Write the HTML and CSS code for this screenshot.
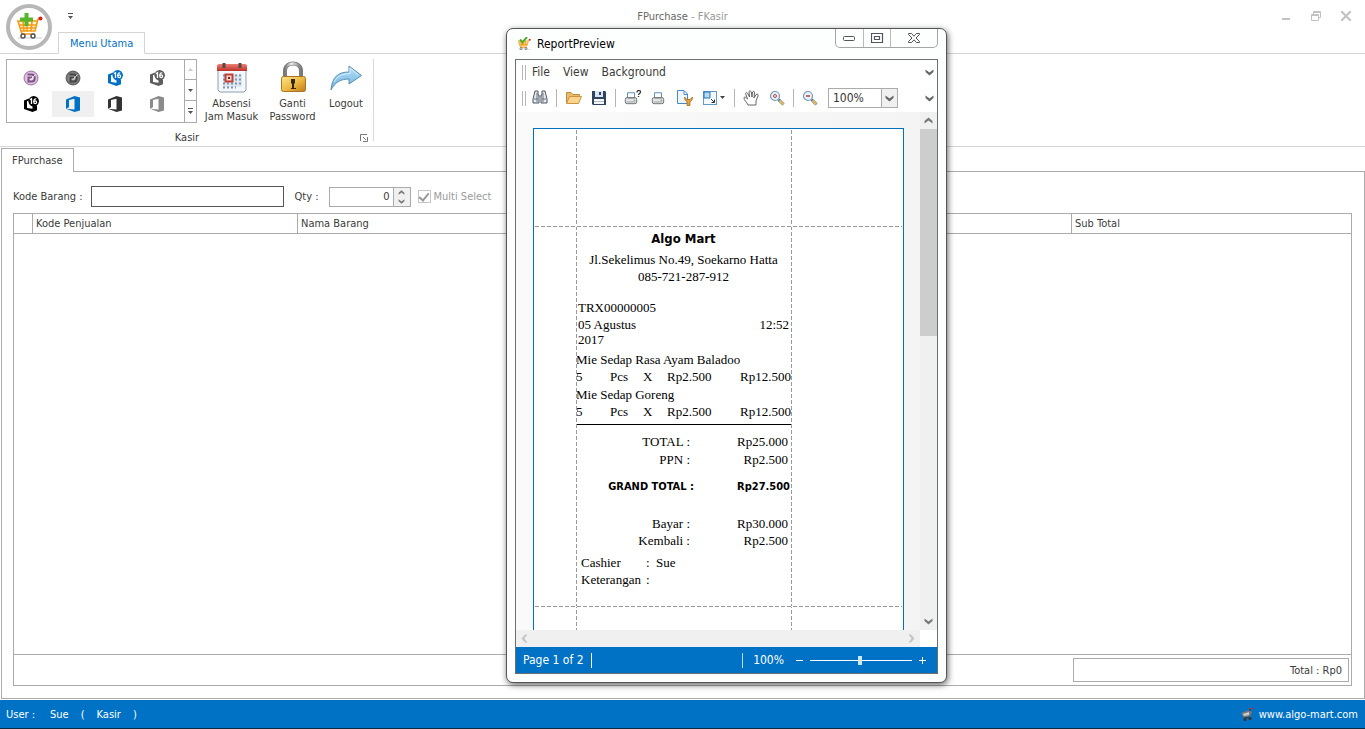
FILE: index.html
```html
<!DOCTYPE html>
<html lang="id">
<head>
<meta charset="utf-8">
<title>FPurchase - FKasir</title>
<link rel="stylesheet" href="styles.css">
</head>
<body>
<svg class="defs" aria-hidden="true">
  <defs>
    <linearGradient id="gold" x1="0" y1="0" x2="1" y2="1"><stop offset="0" stop-color="#ffe58a"/><stop offset=".5" stop-color="#eebb45"/><stop offset="1" stop-color="#c07b17"/></linearGradient>
    <linearGradient id="steel"><stop offset="0" stop-color="#777"/><stop offset=".4" stop-color="#eee"/><stop offset="1" stop-color="#777"/></linearGradient>
    <linearGradient id="sky" x1="0" y1="0" x2="0" y2="1"><stop offset="0" stop-color="#b4e0f8"/><stop offset="1" stop-color="#6fb0de"/></linearGradient>
    <linearGradient id="red" x1="0" y1="0" x2="0" y2="1"><stop offset="0" stop-color="#ee8074"/><stop offset="1" stop-color="#bd3028"/></linearGradient>
    <radialGradient id="purple"><stop offset="0" stop-color="#f8e8f9"/><stop offset="1" stop-color="#dcabe2"/></radialGradient>
    <radialGradient id="iron"><stop offset="0" stop-color="#c4c4c4"/><stop offset="1" stop-color="#666"/></radialGradient>
    <symbol id="office" viewBox="0 0 16 16"><path d="M1 3.500 9.500 0 15 1.500V14.500L9.500 16 1 12.800 9.500 13.500V2.700L4 4V11.300L1 12.800Z" fill="currentColor"/></symbol>
    <symbol id="office16" viewBox="0 0 16 16"><path d="M1 4.500 6 2.500V4.500L4 5.200V12L9.500 12.700V10L14 9.500V14.300L9.500 16 1 13Z" fill="currentColor"/><circle cx="10.700" cy="5.200" r="5.200" fill="currentColor"/><path d="M7 3.800 8.500 2.700V8" fill="none" stroke="#fff" stroke-width="1.300"/><path d="M13.300 3C11.300 2.600 10.700 4 10.800 6" fill="none" stroke="#fff" stroke-width="1.200"/><circle cx="12.200" cy="6.300" r="1.400" fill="none" stroke="#fff" stroke-width="1.200"/></symbol>
    <symbol id="dx" viewBox="0 0 16 16"><circle cx="8" cy="8" r="7" stroke="currentColor" stroke-opacity=".7"/><path d="M4.500 4.500H8.500C12.800 4.500 12.800 11.500 8.500 11.500H5.500V7.500H9" fill="none" stroke="currentColor" stroke-width="2"/><path d="M8 9.500 12.500 4.500" stroke="#fff" stroke-opacity=".8"/></symbol>
    <symbol id="cart" viewBox="0 0 28 28"><path d="M3 25H27" stroke="#ccc"/><path d="M2 8H22L20 18H6Z" fill="#fff4d6"/><path d="M2 8H22.500L20 18H6L3 8M4 12H21M5 15H20M8 8 9 18M12 8V18M17 8 16 18M22 8 24 5H26M6 18 7 21H20" fill="none" stroke="#f59a13" stroke-width="1.600"/><circle cx="8" cy="23" r="2" fill="#fff" stroke="#555" stroke-width="1.500"/><circle cx="18" cy="23" r="2" fill="#fff" stroke="#555" stroke-width="1.500"/><circle cx="25.500" cy="5.500" r="2" fill="#d8231d"/></symbol>
    <symbol id="printer" viewBox="0 0 16 16"><path d="M4 8V2H12V8" fill="#fff" stroke="#4a7fb0"/><rect x="1.500" y="7.500" width="13" height="7" rx="2" fill="#e3e5e8" stroke="#666"/><path d="M4 8.500H12M3 12.500H13" stroke="#999"/><path d="M11 10.500H13" stroke="#2da84a"/></symbol>
    <symbol id="lens" viewBox="0 0 16 16"><path d="M9.500 9.500 14.500 14.500" stroke="#55779a" stroke-width="3"/><path d="M10.500 10.500 14.500 14.500" stroke="#edbc55" stroke-width="2"/><circle cx="6" cy="6" r="4.500" fill="#e3f2fc" stroke="#7899b5" stroke-width="1.200"/></symbol>
    <symbol id="down" viewBox="0 0 9 7"><path d="M.5.500 4.500 3.500 8.500.500V3L4.500 6.500.500 3Z" fill="currentColor"/></symbol>
    <symbol id="tri" viewBox="0 0 7 7"><path d="M1 2H6L3.500 5Z" fill="currentColor"/></symbol>
    <symbol id="tribar" viewBox="0 0 7 7"><path d="M1 0H6V1H1ZM1 3H6L3.500 6Z" fill="currentColor"/></symbol>
  </defs>
</svg>

<header class="titlebar">
  <button class="orb" aria-label="Aplikasi"><svg width="28" height="28"><use href="#cart"/><path d="M9.500 0H13.500V4.500H18V8.500H13.500V13H9.500V8.500H5V4.500H9.500Z" fill="#58b52b"/></svg></button>
  <button class="quick" aria-label="Kustomisasi"><svg width="7" height="7"><use href="#tribar"/></svg></button>
  <h1 class="caption">FPurchase <span>- FKasir</span></h1>
  <div class="window-buttons">
    <button aria-label="Minimize"><svg width="10" height="10"><path d="M1 7H9V9H1Z" fill="#c3c3c3"/></svg></button>
    <button aria-label="Restore"><svg width="10" height="10"><path d="M2.500 3V.500H9.500V6.500H8M2 1.500H10M.500 3.500H7.500V9.500H.500ZM0 4.500H8" fill="none" stroke="#c3c3c3"/></svg></button>
    <button aria-label="Close"><svg width="10" height="10"><path d="M0 0 10 10M10 0 0 10" stroke="#c3c3c3" stroke-width="2.200"/></svg></button>
  </div>
</header>
<nav class="ribbon-tabs"><button class="ribbon-tab">Menu Utama</button></nav>

<section class="ribbon">
  <div class="group">
    <div class="group-items">
      <div class="gallery">
        <div class="skins">
          <button class="skin purple" aria-label="Skin 1"><svg width="16" height="16" fill="url(#purple)"><use href="#dx"/></svg></button>
          <button class="skin iron" aria-label="Skin 2"><svg width="16" height="16" fill="url(#iron)"><use href="#dx"/></svg></button>
          <button class="skin blue" aria-label="Skin 3"><svg width="16" height="16"><use href="#office16"/></svg></button>
          <button class="skin gray" aria-label="Skin 4"><svg width="16" height="16"><use href="#office16"/></svg></button>
          <button class="skin black" aria-label="Skin 5"><svg width="16" height="16"><use href="#office16"/></svg></button>
          <button class="skin blue selected" aria-label="Skin 6"><svg width="16" height="16"><use href="#office"/></svg></button>
          <button class="skin dark" aria-label="Skin 7"><svg width="16" height="16"><use href="#office"/></svg></button>
          <button class="skin silver" aria-label="Skin 8"><svg width="16" height="16"><use href="#office"/></svg></button>
        </div>
        <div class="gallery-scroll">
          <button aria-label="Naik" disabled><svg width="7" height="7"><path d="M1 5H6L3.500 2Z" fill="#ccc"/></svg></button>
          <button aria-label="Turun"><svg width="7" height="7"><use href="#tri"/></svg></button>
          <button aria-label="Semua"><svg width="7" height="7"><use href="#tribar"/></svg></button>
        </div>
      </div>
      <button class="big"><svg width="32" height="32" viewBox="0 0 32 32"><path d="M2 5H30V29L28 31H4L2 29Z" fill="#f5f8fb" stroke="#8da0b4"/><path d="M1 10V4.500Q1 3 3 3H29Q31 3 31 4.500V10Z" fill="url(#red)"/><path d="M8 2V7M24 2V7" stroke="#57484c" stroke-width="3"/><path d="M7 13H26V26H7Z" fill="#dfe7ef"/><path d="M7 14.500H26M7 18.500H26M7 22.500H26M7 26.500H20" stroke="#7e95b5" stroke-width="2" stroke-dasharray="2 2"/><rect x="9.500" y="13.500" width="7" height="7" fill="#f9d6cf" stroke="#bf4034" stroke-width="2"/><path d="M12 16H14V18H12Z" fill="#7d2420"/></svg><span>Absensi<br>Jam Masuk</span></button>
      <button class="big"><svg width="32" height="32" viewBox="0 0 32 32"><path d="M8 17V10C8 0 24 0 24 10V17" fill="none" stroke="#777" stroke-width="4"/><path d="M8 17V10C8 0 24 0 24 10V17" fill="none" stroke="url(#steel)" stroke-width="2.500"/><rect x="4.500" y="15.500" width="24" height="15" rx="2" fill="url(#gold)" stroke="#a77422"/><path d="M14 18H18V22L17 23V27H19V28H14V27H15V23L14 22Z" fill="#33291a"/></svg><span>Ganti<br>Password</span></button>
      <button class="big"><svg width="32" height="32" viewBox="0 0 32 32"><path d="M1 29C2 16 8 11 19 11V5L31.500 14.500 19 23V18C11 18 5 21 1 29Z" fill="url(#sky)" stroke="#5b8fb8"/><path d="M4 21C8 14 13 13 20 12.500V7L28 14" fill="none" stroke="#d6f1ff"/></svg><span>Logout</span></button>
    </div>
    <div class="group-foot"><span>Kasir</span><button class="launcher" aria-label="Opsi Kasir"><svg width="8" height="8"><path d="M.500 7V.500H7M3 3 6 6M7.500 3V7.500H3" fill="none" stroke="#777"/></svg></button></div>
  </div>
</section>

<main class="workspace">
  <div class="doc-tabs"><button class="doc-tab">FPurchase</button></div>
  <div class="doc">
    <form class="entry">
      <label for="kode">Kode Barang :</label>
      <input class="code" id="kode" type="text">
      <label for="qty">Qty :</label>
      <div class="spin">
        <input id="qty" type="text" value="0">
        <div class="spin-buttons"><button type="button" aria-label="Tambah"><svg class="flip" width="7" height="5"><use href="#down"/></svg></button><button type="button" aria-label="Kurang"><svg width="7" height="5"><use href="#down"/></svg></button></div>
      </div>
      <label class="multi"><input type="checkbox" checked disabled>Multi Select</label>
    </form>
    <div class="grid">
      <table>
        <colgroup><col class="c-mark"><col class="c-code"><col><col class="c-sub"></colgroup>
        <thead><tr><th></th><th>Kode Penjualan</th><th>Nama Barang</th><th>Sub Total</th></tr></thead>
      </table>
      <div class="grid-body"></div>
      <div class="grid-foot"><output>Total : Rp0</output></div>
    </div>
  </div>
</main>

<footer class="status">
  <div class="user"><span>User :</span><span>Sue</span><span>(</span><span>Kasir</span><span>)</span></div>
  <div class="site"><svg width="12" height="13"><path d="M0 5 8 2 11 4 9 9 3 10Z" fill="#777"/><path d="M2 6 8 4V7L3 8Z" fill="#ccc"/><path d="M3 10 9 9M8 3 10 1" stroke="#333"/><path d="M8 .500H12V2" fill="none" stroke="#c22b2b"/><circle cx="4" cy="11.500" r="1.500" fill="#333"/><circle cx="9" cy="10.500" r="1.500" fill="#333"/></svg><span>www.algo-mart.com</span></div>
</footer>

<div class="preview" role="dialog" aria-labelledby="preview-title">
  <div class="preview-title">
    <svg width="14" height="14" viewBox="0 0 28 28"><use href="#cart"/><path d="M6 5 11 11 20 0" fill="none" stroke="#4fae2a" stroke-width="4"/></svg>
    <h2 id="preview-title">ReportPreview</h2>
    <div class="aero">
      <button aria-label="Minimize"><svg width="13" height="5"><rect x=".5" y=".5" width="11" height="4" rx="1" fill="#fff" stroke="#50545f"/></svg></button>
      <button aria-label="Maximize"><svg width="13" height="10"><path d="M.500.500H11.500V9.500H.500ZM3.500 3.500H8.500V6.500H3.500Z" fill="#fff" stroke="#50545f" stroke-width="1.200"/></svg></button>
      <button aria-label="Close"><svg width="12" height="10"><path d="M.500.500H3.500L6 3.200 8.500.500H11.500V1.500L8 5 11.500 8.500V9.500H8.500L6 6.800 3.500 9.500H.500V8.500L4 5 .500 1.500Z" fill="#fff" stroke="#50545f"/></svg></button>
    </div>
  </div>
  <div class="preview-body">
    <div class="menubar"><i class="grip"></i><button>File</button><button>View</button><button>Background</button><svg class="more" width="9" height="7"><use href="#down"/></svg></div>
    <div class="toolbar">
      <i class="grip"></i>
      <button aria-label="Cari"><svg width="16" height="16"><path d="M3 1H6V4L7 6V13H1V9ZM10 1H13L15 9V13H9V6L10 4Z" fill="#e6e9ee" stroke="#4c5560"/><path d="M2 9H6M10 9H14M5 3V12M11 3V12M7 6H9" stroke="#68717d"/></svg></button>
      <i class="sep"></i>
      <button class="t-open" aria-label="Buka"><svg width="17" height="16"><path d="M1.500 13V2.500H6L8 4.500H14.500V7" fill="#e9bc6b" stroke="#c08b38"/><path d="M1.500 13.500 4.500 6.500H16.500L13.500 13.500Z" fill="#fbd48d" stroke="#cc9442"/></svg></button>
      <button class="t-save" aria-label="Simpan"><svg width="16" height="16"><path d="M1 1H14L15 2V15H2L1 14Z" fill="#31445f"/><path d="M4 1H12V7H4Z" fill="#d8e5f2"/><path d="M8 2H10V5H8Z" fill="#31445f"/><path d="M3 9H13V14H3Z" fill="#f5f7f9"/><path d="M3 11.500H13" stroke="#b3bdc8"/></svg></button>
      <i class="sep"></i>
      <button class="t-print" aria-label="Cetak"><svg width="18" height="16"><use href="#printer" width="14" height="16"/><path d="M13 2.500C13-.200 16.500-.200 16.500 2 16.500 3.500 14.500 3.500 14.500 5M14.500 6V7" fill="none" stroke="#333" stroke-width="1.300"/></svg></button>
      <button class="t-quick" aria-label="Cetak langsung"><svg width="16" height="16"><use href="#printer" width="14" height="16"/></svg></button>
      <button class="t-page" aria-label="Pengaturan halaman"><svg width="17" height="16"><path d="M1.500.500H8L11.500 4V13.500H1.500ZM8 1V4.500H11" fill="#eef7ff" stroke="#4a8ac4"/><path d="M8.500 7 9 10 11 11.500V15.500H14V11.500L16 10 16.500 7 14 9.500H11Z" fill="#e5a33c" stroke="#a86a17" stroke-width=".8"/></svg></button>
      <button class="t-scale" aria-label="Skala"><svg width="24" height="16"><rect x="1.500" y="1.500" width="13" height="13" fill="#f5faff" stroke="#5e9ccc"/><path d="M2 2H8V8H2Z" fill="#b5daf6" stroke="#2575b5"/><path d="M9 9 12 12M9.500 12.500H12.500V9.500" fill="none" stroke="#333"/><path d="M18 6H23L20.500 9Z" fill="#444"/></svg></button>
      <i class="sep"></i>
      <button class="t-hand" aria-label="Geser"><svg width="17" height="16"><path d="M5 15C4 12 .500 10 1 7.500 2 6.500 3 7.500 4.500 9L2.500 3.500C3 2 4.500 2.500 5 4L6.500 7 6 1.500C7 .300 8 1 8.300 2L9 7 9.500 2C10.500 .500 11.700 1.500 11.500 3L11 8 13 4.500C14.500 3.500 15.500 4.500 15 6L13 11V15Z" fill="#fff" stroke="#666"/></svg></button>
      <button class="t-zoom" aria-label="Kaca pembesar"><svg width="16" height="16"><use href="#lens"/><circle cx="6" cy="6" r="1.500" fill="none" stroke="#cc3b34"/></svg></button>
      <i class="sep"></i>
      <button class="t-out" aria-label="Perkecil"><svg width="16" height="16"><use href="#lens"/><path d="M4 6H8" stroke="#c53b34" stroke-width="1.500"/></svg></button>
      <div class="zoom"><select aria-label="Zoom"><option>100%</option></select><svg width="9" height="7"><use href="#down"/></svg></div>
      <svg class="more" width="9" height="7"><use href="#down"/></svg>
    </div>
    <div class="viewer">
      <div class="canvas">
        <div class="paper">
          <i class="guide v left"></i><i class="guide v right"></i><i class="guide h top"></i><i class="guide h bottom"></i>
          <article class="receipt">
            <h3>Algo Mart</h3>
            <p class="address">Jl.Sekelimus No.49, Soekarno Hatta<br>085-721-287-912</p>
            <p class="trx">TRX00000005</p>
            <div class="when"><span class="date">05 Agustus 2017</span><span>12:52</span></div>
            <table class="items">
              <colgroup><col class="i-qty"><col class="i-unit"><col class="i-x"><col class="i-price"><col></colgroup>
              <tr class="name"><td colspan="5">Mie Sedap Rasa Ayam Baladoo</td></tr>
              <tr><td>5</td><td>Pcs</td><td>X</td><td>Rp2.500</td><td>Rp12.500</td></tr>
              <tr class="name"><td colspan="5">Mie Sedap Goreng</td></tr>
              <tr><td>5</td><td>Pcs</td><td>X</td><td>Rp2.500</td><td>Rp12.500</td></tr>
            </table>
            <dl class="sums"><dt>TOTAL :</dt><dd>Rp25.000</dd><dt>PPN :</dt><dd>Rp2.500</dd></dl>
            <dl class="sums grand"><dt>GRAND TOTAL :</dt><dd>Rp27.500</dd></dl>
            <dl class="sums paid"><dt>Bayar :</dt><dd>Rp30.000</dd><dt>Kembali :</dt><dd>Rp2.500</dd></dl>
            <dl class="notes"><dt>Cashier</dt><dd>:&nbsp; Sue</dd><dt>Keterangan</dt><dd>:</dd></dl>
          </article>
        </div>
      </div>
      <div class="vscroll"><svg class="flip" width="9" height="7"><use href="#down"/></svg><div class="thumb"></div><svg class="end" width="9" height="7"><use href="#down"/></svg></div>
      <div class="hscroll"><svg width="7" height="9"><path d="M6.500.500 3.500 4.500 6.500 8.500H4L.500 4.500 4 .500Z" fill="#c6c6c6"/></svg><svg width="7" height="9"><path d="M.500.500 3.500 4.500.500 8.500H3L6.500 4.500 3 .500Z" fill="#c6c6c6"/></svg></div>
      <div class="corner"></div>
    </div>
    <div class="preview-status">
      <span class="page-no">Page 1 of 2</span>
      <span class="percent">100%</span>
      <button aria-label="Perkecil"><svg width="9" height="9"><path d="M1 4.500H8" stroke="#fff"/></svg></button>
      <input type="range" min="0" max="200" value="98" aria-label="Zoom">
      <button aria-label="Perbesar"><svg width="9" height="9"><path d="M1 4.500H8M4.500 1V8" stroke="#fff"/></svg></button>
    </div>
  </div>
</div>
</body>
</html>
```
FILE: styles.css
```css
* { box-sizing: border-box; }

body {
  margin: 0;
  min-height: 100vh;
  display: flex;
  flex-direction: column;
  position: relative;
  background: #fff;
  color: #3b3b3b;
  font: 11px/13px "DejaVu Sans Condensed", "Noto Sans", sans-serif;
}

button, input, select { font: inherit; color: inherit; }
button { margin: 0; padding: 0; border: 0; background: none; }
h1, h2, h3, p, dl, dd { margin: 0; font-size: inherit; }
h1, h2 { font-weight: normal; }
svg { display: block; flex: none; }
i { display: block; flex: none; }
.defs { position: absolute; width: 0; height: 0; }
.flip { transform: rotate(180deg); }

/* Title bar */
.titlebar {
  height: 32px;
  display: grid;
  grid-template-columns: 1fr auto 1fr;
  align-items: center;
}
.orb {
  position: absolute;
  left: 6px;
  top: 4px;
  width: 46px;
  height: 46px;
  display: grid;
  place-items: center;
  border: 4px solid #b7b7b7;
  border-radius: 50%;
  background: #fff;
}
.quick { justify-self: start; margin-left: 67px; color: #555; }
.caption { color: #666; }
.caption span { color: #999; }
.window-buttons { justify-self: end; display: flex; gap: 20px; padding-right: 14px; }

/* Ribbon */
.ribbon-tabs { height: 22px; padding-left: 58px; border-bottom: 1px solid #d4d4d4; }
.ribbon-tab {
  height: 22px;
  padding: 0 11px;
  border: 1px solid #d4d4d4;
  border-bottom-color: #fff;
  background: #fff;
  color: #0072c6;
}
.ribbon { display: flex; height: 93px; padding: 5px 6px; border-bottom: 1px solid #d4d4d4; }
.group { display: flex; flex-direction: column; border-right: 1px solid #d9d9d9; }
.group-items { display: flex; padding-right: 4px; }
.gallery { display: flex; width: 191px; height: 64px; margin-right: 4px; border: 1px solid #ababab; }
.skins { flex: 1; display: grid; grid-template-columns: repeat(4, 42px); grid-auto-rows: 26px; padding: 5px 3px; }
.skin { display: grid; place-items: center; }
.selected { background: #f0f0f0; }
.purple { color: #79577d; }
.iron { color: #444; }
.blue { color: #0072c6; }
.gray { color: #5e5e5e; }
.black { color: #000; }
.dark { color: #333; }
.silver { color: #8b8b8b; }
.gallery-scroll { width: 12px; display: grid; grid-template-rows: 19px 21px 1fr; border-left: 1px solid #ababab; }
.gallery-scroll button { display: grid; place-items: center; color: #555; }
.gallery-scroll button + button { border-top: 1px solid #ababab; }
.big { display: flex; flex-direction: column; align-items: center; gap: 4px; width: 61px; padding-top: 2px; }
.big:last-child { width: 46px; }
.group-foot { display: grid; grid-template-columns: 1fr auto 1fr; align-items: center; padding: 8px 5px 0 0; }
.group-foot span { grid-column: 2; }
.launcher { justify-self: end; }

/* Document */
.workspace { flex: 1; display: flex; flex-direction: column; padding: 1px 0 1px 1px; }
.doc-tabs { display: flex; height: 24px; }
.doc-tab { height: 24px; padding: 0 10px; border: 1px solid #ababab; border-bottom: 0; background: #fff; position: relative; z-index: 1; }
.doc { flex: 1; display: flex; flex-direction: column; padding: 14px 12px 12px 11px; border: 1px solid #ababab; margin-top: -1px; }
.entry { display: flex; align-items: center; height: 21px; margin-bottom: 6px; }
.code { width: 193px; height: 21px; margin: 0 11px 0 8px; border: 1px solid #555; padding: 0 4px; }
.spin { display: flex; width: 82px; height: 20px; margin: 0 7px 0 10px; border: 1px solid #ababab; }
.spin input { flex: 1; min-width: 0; border: 0; padding: 0 3px; text-align: right; }
.spin-buttons { display: grid; width: 17px; border-left: 1px solid #ababab; background: #f0f0f0; color: #777; }
.spin-buttons button { display: grid; place-items: center; }
.multi { display: flex; align-items: center; gap: 3px; color: #9b9b9b; }
.multi input { appearance: none; width: 13px; height: 13px; margin: 0; border: 1px solid #c6c6c6; display: grid; place-items: center; }
.multi input::before { content: ""; width: 8px; height: 4px; border: solid #999; border-width: 0 0 2px 2px; transform: translateY(-1px) rotate(-50deg); }
.grid { flex: 1; display: flex; flex-direction: column; border: 1px solid #ababab; }
.grid table { width: 100%; border-spacing: 0; table-layout: fixed; }
.grid th { height: 20px; padding: 0 3px; font-weight: normal; text-align: left; border: solid #ababab; border-width: 0 1px 1px 0; }
.grid th:last-child { border-right: 0; }
.c-mark { width: 19px; }
.c-code { width: 265px; }
.c-sub { width: 279px; }
.grid-body { flex: 1; }
.grid-foot { display: flex; justify-content: flex-end; padding: 3px 2px; border-top: 1px solid #ababab; }
.grid-foot output { width: 276px; height: 24px; padding: 5px 6px; border: 1px solid #ababab; text-align: right; }

/* Main status bar */
.status {
  display: flex;
  justify-content: space-between;
  align-items: center;
  height: 29px;
  padding: 0 7px 0 6px;
  background: #0072c6;
  border-bottom: 1px solid #0b2a42;
  color: #fff;
}
.user { display: flex; gap: 12px; }
.user span:first-child { margin-right: 3px; }
.site { display: flex; align-items: center; gap: 6px; }

/* Report preview window */
.preview {
  position: absolute;
  left: 506px;
  top: 28px;
  width: 441px;
  padding: 0 8px 8px;
  border: 1px solid #555;
  border-radius: 7px;
  background: #fdfefe;
  box-shadow: 1px 2px 6px rgba(0, 0, 0, .6);
  font-size: 12px;
  line-height: 15px;
}
.preview-title { display: flex; align-items: center; height: 30px; padding-left: 2px; gap: 6px; color: #000; }
.aero { display: flex; align-self: flex-start; margin-left: auto; height: 19px; border: 1px solid #a5a5a5; border-top: 0; border-radius: 0 0 5px 5px; }
.aero button { display: grid; place-items: center; width: 27px; }
.aero button + button { border-left: 1px solid #b9b9b9; }
.aero button:last-child { width: 47px; }
.preview-body { border: 1px solid #6e6e6e; background: #fff; }
.menubar, .toolbar { display: flex; align-items: center; height: 26px; padding: 0 3px 0 6px; }
.menubar { height: 25px; }
.menubar button { margin-right: 13px; }
.grip { width: 4px; height: 15px; margin-right: 6px; border: solid #b5b5b5; border-width: 0 1px; }
.more { margin-left: auto; color: #666; }
.sep { width: 1px; height: 18px; margin: 0 8px; background: #b5b5b5; }
.t-save, .t-quick, .t-page { margin-left: 9px; }
.t-scale, .t-zoom { margin-left: 9px; }
.zoom { display: flex; align-items: center; position: relative; width: 70px; height: 20px; margin-left: 10px; color: #333; }
.zoom select { appearance: none; width: 100%; height: 20px; padding: 0 4px; border: 1px solid #ababab; border-radius: 0; background: linear-gradient(90deg, #fff 52px, #ababab 52px, #ababab 53px, #f0f0f0 53px); }
.zoom svg { position: absolute; right: 4px; top: 7px; color: #666; pointer-events: none; }
.viewer { display: grid; grid-template-columns: 1fr 17px; margin-top: 1px; }
.canvas { padding: 16px 16px 0 17px; background: linear-gradient(90deg, #fafafa, #f4f4f4); }
.paper { position: relative; padding: 98px 112px 42px 42px; border: 1px solid #0072c6; border-bottom: 0; background: #fff; }
.guide { position: absolute; }
.v { top: 1px; bottom: 0; width: 1px; background: repeating-linear-gradient(#999 0 4px, #fff 4px 6px); }
.h { left: 1px; right: 1px; height: 1px; background: repeating-linear-gradient(90deg, #999 0 4px, #fff 4px 6px); }
.left { left: 42px; }
.right { right: 111px; }
.top { top: 97px; }
.bottom { bottom: 23px; }

.receipt { color: #000; font: 13px/17px "Liberation Serif", serif; }
.receipt h3 { font: bold 13px/24px "DejaVu Sans Condensed", "Noto Sans", sans-serif; text-align: center; }
.address { text-align: center; }
.trx { margin: 14px 0 1px; padding-left: 2px; }
.when { display: flex; justify-content: space-between; padding: 0 2px; line-height: 15px; }
.date { width: 80px; }
.items { width: 100%; margin-top: 4px; border-spacing: 0; table-layout: fixed; border-bottom: 1px solid #000; }
.items td { height: 18px; padding: 0; line-height: 18px; }
.items tr:last-child td { height: 21px; padding-bottom: 3px; }
.items .name td { height: 17px; line-height: 17px; }
.items td:nth-child(5) { text-align: right; }
.i-qty { width: 34px; }
.i-unit { width: 33px; }
.i-x { width: 24px; }
.i-price { width: 60px; }
.sums { display: grid; grid-template-columns: 114px 1fr; row-gap: 1px; margin-top: 8px; padding-right: 3px; text-align: right; }
.grand { grid-template-columns: 118px 1fr; margin-top: 10px; padding-right: 1px; font: bold 11px/17px "DejaVu Sans Condensed", "Noto Sans", sans-serif; }
.paid { margin-top: 20px; row-gap: 0; }
.notes { display: grid; grid-template-columns: 65px 1fr; margin-top: 5px; padding-left: 5px; }

.vscroll { position: relative; display: flex; flex-direction: column; align-items: center; justify-content: space-between; padding: 5px 0; background: #f0f0f0; color: #777; }
.thumb { position: absolute; left: 0; right: 0; top: 17px; height: 40%; background: #cdcdcd; }
.hscroll { display: flex; align-items: center; justify-content: space-between; height: 17px; padding: 0 5px; background: #f0f0f0; }
.corner { background: #fff; }
.preview-status { display: flex; align-items: center; height: 26px; padding: 0 10px 0 7px; background: #0072c6; color: #fff; }
.page-no { padding-right: 7px; border-right: 1px solid #fff; }
.percent { margin-left: auto; margin-right: 11px; padding-left: 10px; border-left: 1px solid #bcdcf3; }
.preview-status input { appearance: none; width: 102px; height: 11px; margin: 0 6px; background: linear-gradient(#fff, #fff) center / 100% 1px no-repeat; }
.preview-status input::-webkit-slider-thumb { appearance: none; width: 4px; height: 9px; background: #cfe6f7; border: 0; }
```
